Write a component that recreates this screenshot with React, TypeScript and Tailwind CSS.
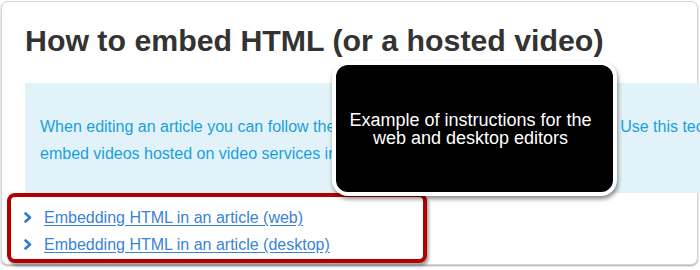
import React from "react";

function Chevron() {
  return (
    <svg width="8" height="11" viewBox="0 0 8 11" className="shrink-0">
      <polyline
        points="1.5,1.5 6,5.5 1.5,9.5"
        fill="none"
        stroke="#2f7bd3"
        strokeWidth="2.6"
        strokeLinecap="round"
        strokeLinejoin="round"
      />
    </svg>
  );
}

export default function App() {
  return (
    <div className="relative w-[700px] h-[270px] overflow-hidden bg-white font-['Liberation_Sans',Arial,Helvetica,sans-serif]">
      <div className="ml-[1px] mt-[1px] w-[697px] h-[264px] rounded-[7px] border border-[#d6d6d6] bg-white pl-[23px] shadow-[0_1px_2px_rgba(0,0,0,0.35)]">
        <h1 className="pt-[21px] text-[30.3px] font-bold leading-[36px] text-[#333333] whitespace-nowrap">
          How to embed HTML (or a hosted video)
        </h1>
        <div className="mt-[24px] -mr-[6px] h-[110px] bg-[#e1f3f8] pl-[15px] pt-[30px] text-[16px] leading-[27px] text-[#1a9fe0] whitespace-nowrap overflow-hidden">
          When editing an article you can follow the steps below to embed HTML code in it. Use this technique to
          <br />
          embed videos hosted on video services including YouTube, Vimeo and Wistia.
        </div>
        <div className="-ml-[18px] w-[420px] h-[70px] rounded-[8px] border-[4px] border-[#b30000] bg-white pl-[13px] pt-[7px] shadow-[2px_3px_3px_rgba(0,0,0,0.35)]">
          <ul className="text-[16px] leading-[27px]">
            <li className="flex items-center gap-[12px]">
              <Chevron />
              <a href="#" className="text-[#3a82d8] underline underline-offset-[2px] whitespace-nowrap">
                Embedding HTML in an article (web)
              </a>
            </li>
            <li className="flex items-center gap-[12px]">
              <Chevron />
              <a href="#" className="text-[#3a82d8] underline underline-offset-[2px] whitespace-nowrap">
                Embedding HTML in an article (desktop)
              </a>
            </li>
          </ul>
        </div>
      </div>

      <div className="absolute left-[332px] top-[61px] w-[285px] h-[135px] rounded-[16px] border-[4px] border-white bg-black shadow-[1px_3px_4px_rgba(0,0,0,0.45)] flex items-center justify-center pr-[8px]">
        <p className="text-center text-[18px] leading-[18px] text-white">
          Example of instructions for the
          <br />
          web and desktop editors
        </p>
      </div>
    </div>
  );
}
